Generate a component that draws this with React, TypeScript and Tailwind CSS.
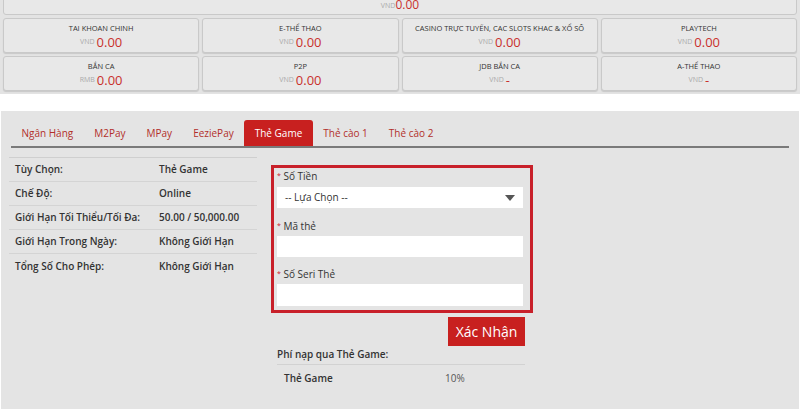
const cards = [
  { title: "TAI KHOAN CHINH", cur: "VND", amount: "0.00" },
  { title: "E-THỂ THAO", cur: "VND", amount: "0.00" },
  { title: "CASINO TRỰC TUYẾN, CAC SLOTS KHAC & XỔ SỐ", cur: "VND", amount: "0.00" },
  { title: "PLAYTECH", cur: "VND", amount: "0.00" },
  { title: "BẮN CA", cur: "RMB", amount: "0.00" },
  { title: "P2P", cur: "VND", amount: "0.00" },
  { title: "JDB BẮN CA", cur: "VND", amount: "-" },
  { title: "A-THỂ THAO", cur: "VND", amount: "-" },
]

const tabs = ["Ngân Hàng", "M2Pay", "MPay", "EeziePay", "Thẻ Game", "Thẻ cào 1", "Thẻ cào 2"]

const info = [
  ["Tùy Chọn:", "Thẻ Game"],
  ["Chế Độ:", "Online"],
  ["Giới Hạn Tối Thiểu/Tối Đa:", "50.00 / 50,000.00"],
  ["Giới Hạn Trong Ngày:", "Không Giới Hạn"],
  ["Tổng Số Cho Phép:", "Không Giới Hạn"],
]

export default function App() {
  return (
    <div className="w-[800px] h-[409px] overflow-hidden bg-white text-[#333]" style={{ fontFamily: '"Open Sans", "Noto Sans", sans-serif' }}>
      {/* balances */}
      <div className="bg-[#e3e3e3] px-[3px] pb-[3px] flex flex-col gap-[3px]">
        <div className="h-[16px] -mt-[1px] bg-[#e8e8e8] border border-[#c9c9c9] rounded-b-[3px] flex items-end justify-center leading-none pb-[3px]">
          <span className="text-[7px] text-[#aaa] mb-[2px]">VND</span>
          <span className="text-[12px] text-[#c9302c]">0.00</span>
        </div>
        <div className="grid grid-cols-4 gap-[3px]">
          {cards.map((c) => (
            <div key={c.title} className="h-[35px] bg-[#e8e8e8] border border-[#c9c9c9] rounded-[3px] flex flex-col items-center pt-[5px] shadow-[0_1px_1px_rgba(0,0,0,0.12)]">
              <div className="text-[7.5px] leading-[9px] text-[#333] uppercase">{c.title}</div>
              <div className="flex items-end leading-none mt-[2px]">
                <span className="text-[7px] leading-[8px] text-[#aaa] mb-[3px] mr-[2px]">{c.cur}</span>
                <span className="text-[13px] leading-[14px] text-[#c9302c]">{c.amount}</span>
              </div>
            </div>
          ))}
        </div>
      </div>

      {/* payment panel */}
      <div className="mt-[17px] mx-[1px] bg-[#e4e4e4] h-[300px] px-[10px] pt-[9px]">
        <div className="flex border-b-2 border-[#7a7a7a]">
          {tabs.map((t) => (
            <div
              key={t}
              className={
                t === "Thẻ Game"
                  ? "h-[26px] px-[10.5px] flex items-center text-[10px] bg-[#c8201f] text-white rounded-t-[3px]"
                  : "h-[26px] px-[10.5px] flex items-center text-[10px] text-[#b22f2a]"
              }
            >
              {t}
            </div>
          ))}
        </div>

        <div className="flex pt-[9px]">
          {/* info table */}
          <div className="w-[248px] -ml-[2px] border-t border-[#cfcfcf]">
            {info.map(([k, v]) => (
              <div key={k} className="flex h-[24px] items-center border-b border-[#d4d4d4] last:border-b-0 text-[10px] font-semibold text-[#333]">
                <div className="w-[150px] pl-[6px]">{k}</div>
                <div>{v}</div>
              </div>
            ))}
          </div>

          {/* form */}
          <div className="ml-[14px] w-[262px] pt-[8px]">
            <div className="border-[3px] border-[#c8202a] pl-[3px] pr-[7px] pt-[1px] pb-[4px]">
              <div className="text-[10px] leading-[14px] mb-[4px]">
                <span className="text-[#c8202a] text-[7px] align-top">*</span> Số Tiền
              </div>
              <div className="h-[21px] bg-white flex items-center justify-between px-[8px] text-[10px]">
                <span>-- Lựa Chọn --</span>
                <svg width="10" height="6" viewBox="0 0 10 6"><path d="M0 0h10L5 6z" fill="#555" /></svg>
              </div>
              <div className="text-[10px] leading-[14px] mt-[11px] mb-[3px]">
                <span className="text-[#c8202a] text-[7px] align-top">*</span> Mã thẻ
              </div>
              <div className="h-[21px] bg-white" />
              <div className="text-[10px] leading-[14px] mt-[10px] mb-[3px]">
                <span className="text-[#c8202a] text-[7px] align-top">*</span> Số Seri Thẻ
              </div>
              <div className="h-[22px] bg-white" />
            </div>

            <div className="flex justify-end pr-[8px] mt-[4px]">
              <div className="w-[77px] h-[29px] bg-[#c8201f] text-white text-[14px] flex items-center justify-center">Xác Nhận</div>
            </div>

            <div className="pl-[6px] pr-[8px]">
              <div className="text-[10px] leading-[14px] font-semibold mt-[1px] pb-[3px] border-b border-[#d2d2d2]">Phí nạp qua Thẻ Game:</div>
              <div className="flex text-[10px] h-[26px] items-center">
                <div className="w-[168px] pl-[7px] font-semibold">Thẻ Game</div>
                <div className="text-[#555]">10%</div>
              </div>
            </div>
          </div>
        </div>
      </div>
    </div>
  )
}
